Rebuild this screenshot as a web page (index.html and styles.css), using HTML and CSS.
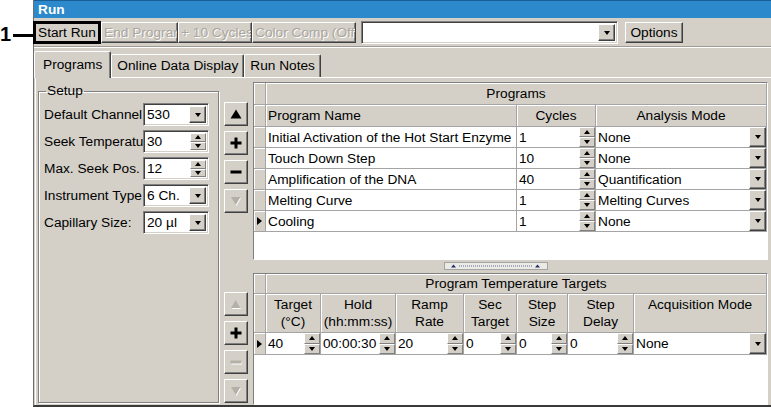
FILE: index.html
```html
<!DOCTYPE html>
<html>
<head>
  <meta charset="UTF-8">
  <title>Run</title>
  <link rel="stylesheet" href="styles.css">
</head>
<body>
  <div class="screen">
    <div class="callout">
      <span class="callout-num">1</span>
      <span class="callout-line"></span>
    </div>

    <div class="window">
      <div class="titlebar">Run</div>

      <div class="toolbar">
        <div class="marked"><button class="tbtn start">Start Run</button></div>
        <button class="tbtn w-end" disabled>End Program</button>
        <button class="tbtn w-cycles" disabled>+ 10 Cycles</button>
        <button class="tbtn w-comp" disabled>Color Comp (Off)</button>
        <div class="combo run-combo">
          <span class="combo-text"></span>
          <span class="drop"></span>
        </div>
        <button class="tbtn options">Options</button>
      </div>

      <div class="tabs">
        <div class="tab active">Programs</div>
        <div class="tab">Online Data Display</div>
        <div class="tab">Run Notes</div>
      </div>

      <div class="panel">
        <fieldset class="setup">
          <legend>Setup</legend>
          <div class="field">
            <span class="field-label">Default Channel</span>
            <div class="combo small"><span class="combo-text">530</span><span class="drop"></span></div>
          </div>
          <div class="field">
            <span class="field-label">Seek Temperature</span>
            <div class="combo small"><span class="combo-text">30</span><span class="spin"><span class="up"></span><span class="down"></span></span></div>
          </div>
          <div class="field">
            <span class="field-label">Max. Seek Pos.</span>
            <div class="combo small"><span class="combo-text">12</span><span class="spin"><span class="up"></span><span class="down"></span></span></div>
          </div>
          <div class="field">
            <span class="field-label">Instrument Type</span>
            <div class="combo small"><span class="combo-text">6 Ch.</span><span class="drop"></span></div>
          </div>
          <div class="field">
            <span class="field-label">Capillary Size:</span>
            <div class="combo small"><span class="combo-text">20 µl</span><span class="drop"></span></div>
          </div>
        </fieldset>

        <div class="work">
          <div class="section programs">
            <div class="side">
              <button class="sbtn"><svg width="12" height="10" viewBox="0 0 12 10"><path d="M6 0.5L11.5 9.5H0.5Z" fill="#000"/></svg></button>
              <button class="sbtn"><svg width="12" height="12" viewBox="0 0 12 12"><path d="M4.5 0.5h3v4h4v3h-4v4h-3v-4h-4v-3h4z" fill="#000"/></svg></button>
              <button class="sbtn"><svg width="12" height="4" viewBox="0 0 12 4"><rect x="0.5" y="0.5" width="11" height="3" fill="#000"/></svg></button>
              <button class="sbtn"><svg width="12" height="11" viewBox="0 0 12 11"><path d="M2 2H11L6.5 10Z" fill="#fff"/><path d="M1 1H10.5L5.75 9Z" fill="#b4b0a8"/></svg></button>
            </div>

            <div class="grid pgrid">
              <div class="ind"></div>
              <div class="hcell span3">Programs</div>
              <div class="ind"></div>
              <div class="hcell left">Program Name</div>
              <div class="hcell">Cycles</div>
              <div class="hcell">Analysis Mode</div>

              <div class="ind"></div>
              <div class="cell">Initial Activation of the Hot Start Enzyme</div>
              <div class="cell num"><span class="val">1</span><span class="spin"><span class="up"></span><span class="down"></span></span></div>
              <div class="cell num"><span class="val">None</span><span class="drop"></span></div>

              <div class="ind"></div>
              <div class="cell">Touch Down Step</div>
              <div class="cell num"><span class="val">10</span><span class="spin"><span class="up"></span><span class="down"></span></span></div>
              <div class="cell num"><span class="val">None</span><span class="drop"></span></div>

              <div class="ind"></div>
              <div class="cell">Amplification of the DNA</div>
              <div class="cell num"><span class="val">40</span><span class="spin"><span class="up"></span><span class="down"></span></span></div>
              <div class="cell num"><span class="val">Quantification</span><span class="drop"></span></div>

              <div class="ind"></div>
              <div class="cell">Melting Curve</div>
              <div class="cell num"><span class="val">1</span><span class="spin"><span class="up"></span><span class="down"></span></span></div>
              <div class="cell num"><span class="val">Melting Curves</span><span class="drop"></span></div>

              <div class="ind current"></div>
              <div class="cell">Cooling</div>
              <div class="cell num"><span class="val">1</span><span class="spin"><span class="up"></span><span class="down"></span></span></div>
              <div class="cell num"><span class="val">None</span><span class="drop"></span></div>
            </div>
          </div>

          <div class="splitter">
            <svg width="104" height="8" viewBox="0 0 104 8">
              <rect x="0.5" y="0.5" width="103" height="7" fill="#eceae4" stroke="#a4a4a4"/>
              <path d="M7 5.5L9.5 2.5L12 5.5Z M91 5.5L93.5 2.5L96 5.5Z" fill="#1c2c6c"/>
              <line x1="15" y1="4" x2="88" y2="4" stroke="#5a6aa0" stroke-dasharray="1 1"/>
            </svg>
          </div>

          <div class="section temps">
            <div class="side">
              <button class="sbtn"><svg width="12" height="11" viewBox="0 0 12 11"><path d="M6.5 2L11 10H2Z" fill="#fff"/><path d="M5.75 1L10.5 9H1Z" fill="#b4b0a8"/></svg></button>
              <button class="sbtn"><svg width="12" height="12" viewBox="0 0 12 12"><path d="M4.5 0.5h3v4h4v3h-4v4h-3v-4h-4v-3h4z" fill="#000"/></svg></button>
              <button class="sbtn"><svg width="12" height="5" viewBox="0 0 12 5"><rect x="1.5" y="1.5" width="11" height="3" fill="#fff"/><rect x="0.5" y="0.5" width="11" height="3" fill="#b4b0a8"/></svg></button>
              <button class="sbtn"><svg width="12" height="11" viewBox="0 0 12 11"><path d="M2 2H11L6.5 10Z" fill="#fff"/><path d="M1 1H10.5L5.75 9Z" fill="#b4b0a8"/></svg></button>
            </div>

            <div class="grid tgrid">
              <div class="ind"></div>
              <div class="hcell span7">Program Temperature Targets</div>
              <div class="ind"></div>
              <div class="hcell two">Target<br>(°C)</div>
              <div class="hcell two">Hold<br>(hh:mm:ss)</div>
              <div class="hcell two">Ramp<br>Rate</div>
              <div class="hcell two">Sec<br>Target</div>
              <div class="hcell two">Step<br>Size</div>
              <div class="hcell two">Step<br>Delay</div>
              <div class="hcell two">Acquisition Mode</div>

              <div class="ind current"></div>
              <div class="cell num"><span class="val">40</span><span class="spin"><span class="up"></span><span class="down"></span></span></div>
              <div class="cell num"><span class="val">00:00:30</span><span class="spin"><span class="up"></span><span class="down"></span></span></div>
              <div class="cell num"><span class="val">20</span><span class="spin"><span class="up"></span><span class="down"></span></span></div>
              <div class="cell num"><span class="val">0</span><span class="spin"><span class="up"></span><span class="down"></span></span></div>
              <div class="cell num"><span class="val">0</span><span class="spin"><span class="up"></span><span class="down"></span></span></div>
              <div class="cell num"><span class="val">0</span><span class="spin"><span class="up"></span><span class="down"></span></span></div>
              <div class="cell num"><span class="val">None</span><span class="drop"></span></div>
            </div>
          </div>
        </div>
      </div>
    </div>
  </div>
</body>
</html>
```

FILE: styles.css
```css
* {
  box-sizing: border-box;
}

body {
  margin: 0;
  background: #fff;
  font-family: "Liberation Sans", Arial, sans-serif;
  font-size: 13.7px;
  color: #000;
}

.screen {
  display: flex;
  height: 407px;
  overflow: hidden;
}

/* annotation outside the window */
.callout {
  width: 33px;
  height: 24px;
  margin-top: 22px;
  display: flex;
  align-items: center;
  flex-shrink: 0;
}

.callout-num {
  font-size: 20px;
  font-weight: bold;
  line-height: 24px;
}

.callout-line {
  flex: 1;
  height: 3px;
  margin: 2px 0 0 2px;
  background: #000;
}

.window {
  flex: 1;
  min-width: 0;
  display: flex;
  flex-direction: column;
  background: #d4d0c8;
  border-left: 1px solid #6f6f6f;
  border-bottom: 2px solid #3a3a3a;
}

.titlebar {
  height: 18px;
  border-top: 1px solid #1b5d96;
  background: #2c89cc;
  color: #fff;
  font-weight: bold;
  line-height: 17px;
  padding-left: 4px;
}

/* toolbar */
.toolbar {
  height: 30px;
  display: flex;
  align-items: center;
  border-bottom: 1px solid #fff;
  box-shadow: inset 0 -1px #a09c94;
}

.tbtn {
  height: 21px;
  padding: 0 2px;
  font: inherit;
  color: #000;
  text-align: left;
  white-space: nowrap;
  overflow: hidden;
  background: #d4d0c8;
  border: 1px solid;
  border-color: #fff #404040 #404040 #fff;
  box-shadow: inset -1px -1px #808080;
}

.tbtn:disabled {
  color: #aaa69e;
  text-shadow: 1px 1px #fff;
}

.marked {
  display: flex;
  height: 23px;
  margin-left: -1px;
  border: 3px solid #000;
}

.marked .tbtn {
  width: 62px;
  height: 17px;
  line-height: 15px;
  border: none;
  box-shadow: none;
}

.w-end {
  width: 77px;
}

.w-cycles {
  width: 74px;
}

.w-comp {
  width: 104px;
}

.options {
  width: 58px;
  margin-left: 7px;
  text-align: center;
}

.combo {
  display: flex;
  align-items: stretch;
  background: #fff;
  border: 1px solid;
  border-color: #808080 #fff #fff #808080;
  box-shadow: inset 1px 1px #404040, inset -1px -1px #d4d0c8;
  padding: 2px 2px 2px 3px;
}

.combo-text {
  flex: 1;
  display: flex;
  align-items: center;
  white-space: nowrap;
}

.run-combo {
  width: 257px;
  height: 23px;
  margin-left: 5px;
}

/* tabs */
.tabs {
  height: 29px;
  display: flex;
  align-items: flex-end;
}

.tab {
  height: 23px;
  padding: 0 5px;
  line-height: 21px;
  border: 1px solid;
  border-bottom: none;
  border-color: #fff #404040 transparent #fff;
  box-shadow: inset -1px 0 #808080;
  border-radius: 2px 2px 0 0;
}

.tab.active {
  height: 27px;
  padding: 2px 8px 0;
  margin-bottom: -1px;
  position: relative;
  z-index: 1;
  background: #d4d0c8;
}

.panel {
  flex: 1;
  min-height: 0;
  display: flex;
  margin-left: 1px;
  padding: 4px 3px 0 2px;
  border-top: 1px solid #fff;
  border-left: 1px solid #fff;
}

/* setup group */
.setup {
  width: 181px;
  margin: 1px 5px 2px 0;
  padding: 4px 7px 0 5px;
  border: 1px solid #808080;
  box-shadow: inset 1px 1px #fff, 1px 1px #fff;
  display: flex;
  flex-direction: column;
  gap: 4px;
  min-width: 0;
}

.setup legend {
  padding: 0 1px;
  margin-left: 2px;
  line-height: 16px;
}

.field {
  display: flex;
  align-items: center;
  height: 23px;
}

.field-label {
  width: 99px;
  flex-shrink: 0;
  white-space: nowrap;
  overflow: hidden;
}

.combo.small {
  width: 66px;
  height: 23px;
}

/* right side */
.work {
  flex: 1;
  min-width: 0;
  display: flex;
  flex-direction: column;
}

.section {
  display: flex;
  gap: 5px;
}

.programs {
  height: 178px;
}

.temps {
  flex: 1;
  min-height: 0;
}

.side {
  width: 24px;
  flex-shrink: 0;
  display: flex;
  flex-direction: column;
  gap: 5px;
}

.programs .side {
  padding-top: 20px;
}

.temps .side {
  padding-top: 19px;
}

.sbtn {
  width: 24px;
  height: 24px;
  padding: 0;
  display: flex;
  align-items: center;
  justify-content: center;
  background: #d4d0c8;
  border: 1px solid;
  border-color: #fff #404040 #404040 #fff;
  box-shadow: inset -1px -1px #808080;
}

.splitter {
  height: 13px;
  display: flex;
  align-items: flex-start;
  justify-content: center;
  padding-top: 2px;
}

/* grids */
.grid {
  flex: 1;
  min-width: 0;
  display: grid;
  align-content: start;
  background: #fff;
  border: 1px solid;
  border-color: #808080 #fff #fff #808080;
}

.pgrid {
  grid-template-columns: 12px 251px 79px 1fr;
  grid-template-rows: 22px 22px repeat(5, 21px);
}

.tgrid {
  grid-template-columns: 12px 55px 75px 68px 53px 51px 66px 1fr;
  grid-template-rows: 20px 39px 22px;
}

.ind,
.hcell,
.cell {
  display: flex;
  align-items: center;
  white-space: nowrap;
  overflow: hidden;
  border-right: 1px solid #a4a4a4;
  border-bottom: 1px solid #a4a4a4;
}

.ind,
.hcell {
  background: #d4d0c8;
  box-shadow: inset 1px 1px #fff;
}

.hcell {
  justify-content: center;
}

.hcell.left {
  justify-content: flex-start;
  padding-left: 2px;
}

.hcell.two {
  display: block;
  text-align: center;
  line-height: 17px;
  padding-top: 2px;
}

.span3 {
  grid-column: span 3;
}

.span7 {
  grid-column: span 7;
}

.ind.current::after {
  content: "";
  margin-left: 3px;
  border-top: 4px solid transparent;
  border-bottom: 4px solid transparent;
  border-left: 5px solid #000;
}

.cell {
  padding-left: 2px;
}

.cell.num {
  align-items: stretch;
}

.val {
  flex: 1;
  display: flex;
  align-items: center;
  overflow: hidden;
}

/* spinner and dropdown buttons */
.spin {
  width: 16px;
  flex-shrink: 0;
  display: flex;
  flex-direction: column;
  background: #d4d0c8;
}

.spin span {
  flex: 1;
  display: flex;
  align-items: center;
  justify-content: center;
  border: 1px solid;
  border-color: #fff #808080 #808080 #fff;
}

.spin span::after {
  content: "";
  border-left: 3.5px solid transparent;
  border-right: 3.5px solid transparent;
}

.spin .up::after {
  border-bottom: 4px solid #000;
}

.spin .down::after {
  border-top: 4px solid #000;
}

.drop {
  width: 17px;
  flex-shrink: 0;
  display: flex;
  align-items: center;
  justify-content: center;
  background: #d4d0c8;
  border: 1px solid;
  border-color: #fff #404040 #404040 #fff;
  box-shadow: inset -1px -1px #808080;
}

.drop::after {
  content: "";
  border-left: 3.5px solid transparent;
  border-right: 3.5px solid transparent;
  border-top: 4px solid #000;
}
```
